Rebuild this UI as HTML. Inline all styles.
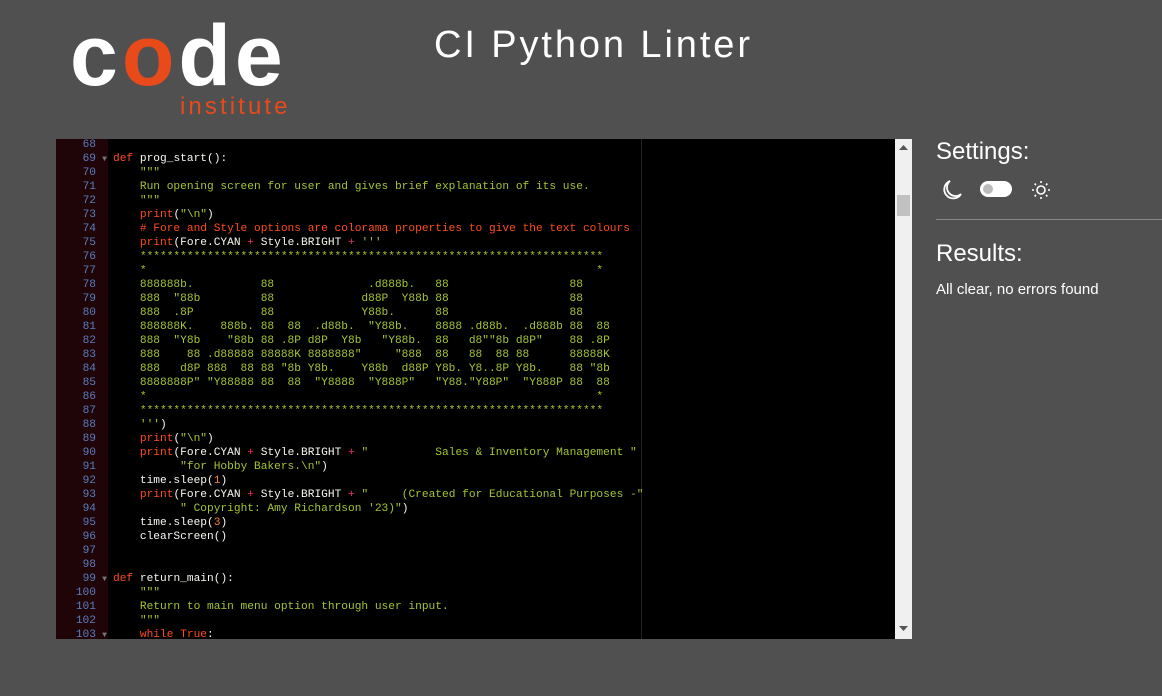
<!DOCTYPE html>
<html><head><meta charset="utf-8"><style>
body{margin:0;width:1162px;height:696px;background:#505050;overflow:hidden;font-family:"Liberation Sans",sans-serif;position:relative}
.logo{position:absolute;left:70px;top:16px;font-family:"Liberation Sans",sans-serif;font-weight:bold;font-size:86px;color:#fff;letter-spacing:4px;line-height:80px}
.logo .o{color:#e84a1a}
.inst{position:absolute;left:180px;top:93px;color:#e84a1a;font-size:24px;letter-spacing:3.1px}
.title{position:absolute;left:434px;top:24px;color:#fff;font-size:38px;letter-spacing:2.9px;font-weight:normal}
.ed{position:absolute;left:56px;top:139px;width:839px;height:500px;background:#000;overflow:hidden}
.gut{position:absolute;left:0;top:0;width:52px;height:500px;background:#1f0508}
.margin{position:absolute;left:585px;top:0;width:1px;height:500px;background:#222}
.lines{position:absolute;left:0;top:-1px;font-family:"Liberation Mono",monospace;font-size:11.2px;line-height:14px}
.ln{display:block;height:14px;white-space:pre}
.num{display:inline-block;width:40px;text-align:right;color:#5b7dbf}
.ar{display:inline-block;width:17px;color:#777;font-size:8px;text-align:center}
.c{color:#a6c431}.k{color:#ff4b1f}.w{color:#f8f8f2}.p{color:#f92672}.n{color:#f0862f}
.sb{position:absolute;left:895px;top:139px;width:17px;height:500px;background:#f0f0f0}
.thumb{position:absolute;left:2px;top:56px;width:13px;height:21px;background:#c1c1c1}
.set{position:absolute;left:936px;top:138px;color:#fff;font-size:24px}
.res{position:absolute;left:936px;top:240px;color:#fff;font-size:24px}
.clear{position:absolute;left:936px;top:281px;color:#fff;font-size:15px}
.hr{position:absolute;left:936px;top:219px;width:226px;height:1px;background:#888}
.tog{position:absolute;left:980px;top:181px;width:32px;height:16px;border-radius:8px;background:#fff}
.tog:after{content:"";position:absolute;left:3px;top:3px;width:10px;height:10px;border-radius:5px;background:#bbb}
</style></head><body>
<div class="logo">c<span class="o">o</span>de</div>
<div class="inst">institute</div>
<div class="title">CI Python Linter</div>
<div class="ed"><div class="gut"></div><div class="margin"></div>
<div class="lines">
<span class="ln"><span class="num">68</span><span class="ar"></span></span>
<span class="ln"><span class="num">69</span><span class="ar">▼</span><span class="k">def</span> <span class="w">prog_start():</span></span>
<span class="ln"><span class="num">70</span><span class="ar"></span><span class="c">    """</span></span>
<span class="ln"><span class="num">71</span><span class="ar"></span><span class="c">    Run opening screen for user and gives brief explanation of its use.</span></span>
<span class="ln"><span class="num">72</span><span class="ar"></span><span class="c">    """</span></span>
<span class="ln"><span class="num">73</span><span class="ar"></span>    <span class="k">print</span><span class="w">(</span><span class="c">"\n"</span><span class="w">)</span></span>
<span class="ln"><span class="num">74</span><span class="ar"></span><span class="k">    # Fore and Style options are colorama properties to give the text colours</span></span>
<span class="ln"><span class="num">75</span><span class="ar"></span>    <span class="k">print</span><span class="w">(Fore.CYAN </span><span class="p">+</span><span class="w"> Style.BRIGHT </span><span class="p">+</span> <span class="c">'''</span></span>
<span class="ln"><span class="num">76</span><span class="ar"></span><span class="c">    *********************************************************************</span></span>
<span class="ln"><span class="num">77</span><span class="ar"></span><span class="c">    *                                                                   *</span></span>
<span class="ln"><span class="num">78</span><span class="ar"></span><span class="c">    888888b.          88              .d888b.   88                  88</span></span>
<span class="ln"><span class="num">79</span><span class="ar"></span><span class="c">    888  "88b         88             d88P  Y88b 88                  88</span></span>
<span class="ln"><span class="num">80</span><span class="ar"></span><span class="c">    888  .8P          88             Y88b.      88                  88</span></span>
<span class="ln"><span class="num">81</span><span class="ar"></span><span class="c">    888888K.    888b. 88  88  .d88b.  "Y88b.    8888 .d88b.  .d888b 88  88</span></span>
<span class="ln"><span class="num">82</span><span class="ar"></span><span class="c">    888  "Y8b    "88b 88 .8P d8P  Y8b   "Y88b.  88   d8""8b d8P"    88 .8P</span></span>
<span class="ln"><span class="num">83</span><span class="ar"></span><span class="c">    888    88 .d88888 88888K 8888888"     "888  88   88  88 88      88888K</span></span>
<span class="ln"><span class="num">84</span><span class="ar"></span><span class="c">    888   d8P 888  88 88 "8b Y8b.    Y88b  d88P Y8b. Y8..8P Y8b.    88 "8b</span></span>
<span class="ln"><span class="num">85</span><span class="ar"></span><span class="c">    8888888P" "Y88888 88  88  "Y8888  "Y888P"   "Y88."Y88P"  "Y888P 88  88</span></span>
<span class="ln"><span class="num">86</span><span class="ar"></span><span class="c">    *                                                                   *</span></span>
<span class="ln"><span class="num">87</span><span class="ar"></span><span class="c">    *********************************************************************</span></span>
<span class="ln"><span class="num">88</span><span class="ar"></span><span class="c">    '''</span><span class="w">)</span></span>
<span class="ln"><span class="num">89</span><span class="ar"></span>    <span class="k">print</span><span class="w">(</span><span class="c">"\n"</span><span class="w">)</span></span>
<span class="ln"><span class="num">90</span><span class="ar"></span>    <span class="k">print</span><span class="w">(Fore.CYAN </span><span class="p">+</span><span class="w"> Style.BRIGHT </span><span class="p">+</span> <span class="c">"          Sales &amp; Inventory Management "</span></span>
<span class="ln"><span class="num">91</span><span class="ar"></span>          <span class="c">"for Hobby Bakers.\n"</span><span class="w">)</span></span>
<span class="ln"><span class="num">92</span><span class="ar"></span><span class="w">    time.sleep(</span><span class="n">1</span><span class="w">)</span></span>
<span class="ln"><span class="num">93</span><span class="ar"></span>    <span class="k">print</span><span class="w">(Fore.CYAN </span><span class="p">+</span><span class="w"> Style.BRIGHT </span><span class="p">+</span> <span class="c">"     (Created for Educational Purposes -"</span></span>
<span class="ln"><span class="num">94</span><span class="ar"></span>          <span class="c">" Copyright: Amy Richardson '23)"</span><span class="w">)</span></span>
<span class="ln"><span class="num">95</span><span class="ar"></span><span class="w">    time.sleep(</span><span class="n">3</span><span class="w">)</span></span>
<span class="ln"><span class="num">96</span><span class="ar"></span><span class="w">    clearScreen()</span></span>
<span class="ln"><span class="num">97</span><span class="ar"></span></span>
<span class="ln"><span class="num">98</span><span class="ar"></span></span>
<span class="ln"><span class="num">99</span><span class="ar">▼</span><span class="k">def</span> <span class="w">return_main():</span></span>
<span class="ln"><span class="num">100</span><span class="ar"></span><span class="c">    """</span></span>
<span class="ln"><span class="num">101</span><span class="ar"></span><span class="c">    Return to main menu option through user input.</span></span>
<span class="ln"><span class="num">102</span><span class="ar"></span><span class="c">    """</span></span>
<span class="ln"><span class="num">103</span><span class="ar">▼</span>    <span class="k">while</span> <span class="k">True</span><span class="w">:</span></span>
</div></div>
<div class="sb"><div class="thumb"></div>
<svg style="position:absolute;left:4px;top:6px" width="9" height="5"><path d="M0 5L4.5 0L9 5Z" fill="#555"/></svg>
<svg style="position:absolute;left:4px;top:487px" width="9" height="5"><path d="M0 0L4.5 5L9 0Z" fill="#555"/></svg>
</div>
<div class="set">Settings:</div>
<svg style="position:absolute;left:941px;top:179px" width="22" height="22" viewBox="0 0 22 22"><path d="M9 2A9 9 0 1 0 20 15A7.5 7.5 0 0 1 9 2Z" fill="none" stroke="#fff" stroke-width="1.8"/></svg>
<div class="tog"></div>
<svg style="position:absolute;left:1031px;top:180px" width="20" height="20" viewBox="0 0 20 20" stroke="#fff" stroke-width="1.6" fill="none"><circle cx="10" cy="10" r="4"/><path d="M10 1v2M10 17v2M1 10h2M17 10h2M3.6 3.6l1.4 1.4M15 15l1.4 1.4M3.6 16.4L5 15M15 5l1.4-1.4"/></svg>
<div class="hr"></div>
<div class="res">Results:</div>
<div class="clear">All clear, no errors found</div>
</body></html>
